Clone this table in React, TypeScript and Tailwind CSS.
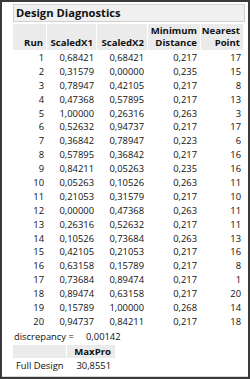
const rows: [number, string, string, string, number][] = [
  [1, '0,68421', '0,68421', '0,217', 17],
  [2, '0,31579', '0,00000', '0,235', 15],
  [3, '0,78947', '0,42105', '0,217', 8],
  [4, '0,47368', '0,57895', '0,217', 13],
  [5, '1,00000', '0,26316', '0,263', 3],
  [6, '0,52632', '0,94737', '0,217', 17],
  [7, '0,36842', '0,78947', '0,223', 6],
  [8, '0,57895', '0,36842', '0,217', 16],
  [9, '0,84211', '0,05263', '0,235', 16],
  [10, '0,05263', '0,10526', '0,263', 11],
  [11, '0,21053', '0,31579', '0,217', 10],
  [12, '0,00000', '0,47368', '0,263', 11],
  [13, '0,26316', '0,52632', '0,217', 11],
  [14, '0,10526', '0,73684', '0,263', 13],
  [15, '0,42105', '0,21053', '0,217', 16],
  [16, '0,63158', '0,15789', '0,217', 8],
  [17, '0,73684', '0,89474', '0,217', 1],
  [18, '0,89474', '0,63158', '0,217', 20],
  [19, '0,15789', '1,00000', '0,268', 14],
  [20, '0,94737', '0,84211', '0,217', 18],
];

const cols = 'grid grid-cols-[34px_50px_51px_53px_43px]';

function HeadCell({ lines }: { lines: string[] }) {
  return (
    <div className="flex flex-col justify-end items-end h-[26px] bg-[#ebebeb] border-r border-white pr-[3px] pb-[1px] leading-[12px] font-bold text-[9.6px]">
      {lines.map((l) => (
        <span key={l}>{l}</span>
      ))}
    </div>
  );
}

export default function App() {
  return (
    <div className="w-[250px] h-[379px] border-2 border-[#3a3a3a] bg-white text-[9.4px] text-[#111] font-['Open_Sans',sans-serif]">
      <div className="h-full border-b border-[#d8d8d8] pl-[11px] pr-[3px] pt-[2px]">
        {/* Title */}
        <div className="h-[18px] bg-[#f0f0f0] border border-[#d0d0d0] pl-[2px] flex items-center font-bold text-[11.2px]">
          Design Diagnostics
        </div>

        {/* Table */}
        <div className="mt-[2px]">
          <div className={cols}>
            <HeadCell lines={['Run']} />
            <HeadCell lines={['ScaledX1']} />
            <HeadCell lines={['ScaledX2']} />
            <HeadCell lines={['Minimum', 'Distance']} />
            <HeadCell lines={['Nearest', 'Point']} />
          </div>
          <div className="pt-[1px]">
            {rows.map((r) => (
              <div key={r[0]} className={`${cols} h-[13.9px] leading-[13.9px] text-right`}>
                <span className="pr-[3px]">{r[0]}</span>
                <span className="pr-[3px]">{r[1]}</span>
                <span className="pr-[4px]">{r[2]}</span>
                <span className="pr-[4px]">{r[3]}</span>
                <span className="pr-[3px]">{r[4]}</span>
              </div>
            ))}
          </div>
        </div>

        {/* Discrepancy */}
        <div className="flex h-[16px] items-center pl-[1px]">
          <span className="w-[72px]">discrepancy =</span>
          <span>0,00142</span>
        </div>

        {/* MaxPro */}
        <div className="grid grid-cols-[54px_48px]">
          <div className="h-[13px] bg-[#ebebeb] border-r border-white" />
          <div className="h-[13px] bg-[#ebebeb] font-bold text-[9.6px] text-right pr-[4px] leading-[13px]">MaxPro</div>
          <div className="pl-[3px] leading-[16px] whitespace-nowrap">Full Design</div>
          <div className="text-right pr-[4px] leading-[16px]">30,8551</div>
        </div>
      </div>
    </div>
  );
}
